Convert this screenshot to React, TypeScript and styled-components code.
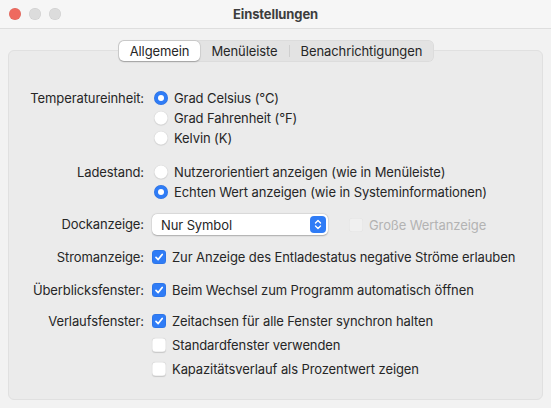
import React from "react";
import styled, { createGlobalStyle } from "styled-components";

const Global = createGlobalStyle`
  html, body { margin: 0; padding: 0; }
  body {
    width: 551px; height: 408px; overflow: hidden;
    font-family: Inter, "Noto Sans", "Liberation Sans", sans-serif;
    font-size: 13px;
    letter-spacing: -0.1px;
    -webkit-font-smoothing: antialiased;
  }
`;

const Window = styled.div`
  width: 551px;
  height: 408px;
  background: #f2f2f2;
  display: flex;
  flex-direction: column;
`;

const TitleBar = styled.div`
  height: 28px;
  flex: none;
  background: #f6f6f6;
  border-bottom: 1px solid #dedede;
  display: grid;
  grid-template-columns: 1fr auto 1fr;
  align-items: center;
`;

const Lights = styled.div`
  display: flex;
  gap: 8px;
  padding-left: 9px;
`;

const Light = styled.span<{ $c: string }>`
  width: 12px;
  height: 12px;
  border-radius: 50%;
  background: ${(p) => p.$c};
  box-shadow: inset 0 0 0 0.5px rgba(0, 0, 0, 0.08);
`;

const Title = styled.div`
  font-weight: 700;
  font-size: 13px;
  color: #3d3d3d;
`;

const Body = styled.div`
  flex: 1;
  display: flex;
  flex-direction: column;
  padding: 11px 8px 8px 8px;
`;

const Tabs = styled.div`
  align-self: center;
  margin-left: 1px;
  position: relative;
  z-index: 1;
  display: flex;
  align-items: center;
  height: 22px;
  box-sizing: border-box;
  padding: 1px;
  background: #e3e3e3;
  border-radius: 6px;
  box-shadow: inset 0 0 0 0.5px rgba(0, 0, 0, 0.06);
`;

const Tab = styled.div<{ $active?: boolean }>`
  height: 20px;
  display: flex;
  align-items: center;
  padding: 0 11px;
  color: #262626;
  border-radius: 5px;
  background: ${(p) => (p.$active ? "#ffffff" : "transparent")};
  box-shadow: ${(p) =>
    p.$active ? "0 0.5px 1.5px rgba(0,0,0,0.25), 0 0 0 0.5px rgba(0,0,0,0.08)" : "none"};
`;

const TabSep = styled.span`
  width: 1px;
  height: 12px;
  background: #cfcfcf;
`;

const Box = styled.div`
  margin-top: -12px;
  flex: 1;
  background: #ebebeb;
  border: 1px solid #e0e0e0;
  border-radius: 6px;
  padding: 37px 0 20px 0;
  display: flex;
  flex-direction: column;
`;

const Row = styled.div<{ $mt?: number }>`
  display: grid;
  grid-template-columns: 135px 1fr;
  column-gap: 8px;
  margin-top: ${(p) => p.$mt ?? 0}px;
`;

const Label = styled.div<{ $h?: number }>`
  text-align: right;
  color: #262626;
  height: ${(p) => p.$h ?? 20}px;
  line-height: ${(p) => p.$h ?? 20}px;
`;

const Controls = styled.div<{ $gap?: number }>`
  display: flex;
  flex-direction: column;
  gap: ${(p) => p.$gap ?? 0}px;
`;

const Line = styled.label<{ $disabled?: boolean; $indent?: number }>`
  display: flex;
  align-items: center;
  height: 20px;
  gap: 6px;
  padding-left: ${(p) => p.$indent ?? 0}px;
  color: ${(p) => (p.$disabled ? "#b3b3b3" : "#262626")};
  white-space: nowrap;
`;

const RadioDot = styled.span<{ $on?: boolean }>`
  width: 14px;
  height: 14px;
  box-sizing: border-box;
  border-radius: 50%;
  flex: none;
  display: flex;
  align-items: center;
  justify-content: center;
  background: ${(p) => (p.$on ? "#2f7cf6" : "#ffffff")};
  box-shadow: ${(p) =>
    p.$on
      ? "inset 0 0 0 0.5px rgba(0,0,0,0.1)"
      : "0 0.5px 1px rgba(0,0,0,0.15), inset 0 0 0 0.5px rgba(0,0,0,0.12)"};
  &::after {
    content: "";
    display: ${(p) => (p.$on ? "block" : "none")};
    width: 6px;
    height: 6px;
    border-radius: 50%;
    background: #ffffff;
  }
`;

const CheckBox = styled.span<{ $on?: boolean; $disabled?: boolean }>`
  width: 14px;
  height: 14px;
  box-sizing: border-box;
  border-radius: 3.5px;
  flex: none;
  display: flex;
  align-items: center;
  justify-content: center;
  background: ${(p) => (p.$on ? "#2f7cf6" : p.$disabled ? "#f0f0f0" : "#ffffff")};
  box-shadow: ${(p) =>
    p.$on
      ? "inset 0 0 0 0.5px rgba(0,0,0,0.1)"
      : p.$disabled
      ? "inset 0 0 0 0.5px rgba(0,0,0,0.06)"
      : "0 0.5px 1px rgba(0,0,0,0.15), inset 0 0 0 0.5px rgba(0,0,0,0.12)"};
`;

const SelectRow = styled.div`
  display: flex;
  align-items: center;
  gap: 21px;
  height: 21px;
`;

const Select = styled.div`
  width: 176px;
  height: 21px;
  box-sizing: border-box;
  background: #ffffff;
  border-radius: 5px;
  box-shadow: 0 0.5px 1.5px rgba(0, 0, 0, 0.25), 0 0 0 0.5px rgba(0, 0, 0, 0.06);
  display: flex;
  align-items: center;
  justify-content: space-between;
  padding: 0 2px 0 9px;
  color: #262626;
`;

const Stepper = styled.span`
  width: 16px;
  height: 17px;
  border-radius: 4px;
  background: #2f7cf6;
  display: flex;
  align-items: center;
  justify-content: center;
`;

const Check = () => (
  <svg width="10" height="10" viewBox="0 0 10 10">
    <path d="M2 5.3 L4.2 7.6 L8.2 2.4" fill="none" stroke="#fff" strokeWidth="1.7" strokeLinecap="round" strokeLinejoin="round" />
  </svg>
);

const Radio = ({ on, children }: { on?: boolean; children: React.ReactNode }) => (
  <Line $indent={2}>
    <RadioDot $on={on} />
    {children}
  </Line>
);

const Cb = ({ on, disabled, children }: { on?: boolean; disabled?: boolean; children: React.ReactNode }) => (
  <Line $disabled={disabled}>
    <CheckBox $on={on} $disabled={disabled}>{on && <Check />}</CheckBox>
    {children}
  </Line>
);

export default function App() {
  return (
    <>
      <Global />
      <Window>
        <TitleBar>
          <Lights>
            <Light $c="#ee6a5f" />
            <Light $c="#dcdcdc" />
            <Light $c="#dcdcdc" />
          </Lights>
          <Title>Einstellungen</Title>
          <div />
        </TitleBar>
        <Body>
          <Tabs>
            <Tab $active>Allgemein</Tab>
            <Tab>Menüleiste</Tab>
            <TabSep />
            <Tab>Benachrichtigungen</Tab>
          </Tabs>
          <Box>
            <Row>
              <Label>Temperatureinheit:</Label>
              <Controls>
                <Radio on>Grad Celsius (°C)</Radio>
                <Radio>Grad Fahrenheit (°F)</Radio>
                <Radio>Kelvin (K)</Radio>
              </Controls>
            </Row>
            <Row $mt={14}>
              <Label>Ladestand:</Label>
              <Controls>
                <Radio>Nutzerorientiert anzeigen (wie in Menüleiste)</Radio>
                <Radio on>Echten Wert anzeigen (wie in Systeminformationen)</Radio>
              </Controls>
            </Row>
            <Row $mt={12}>
              <Label $h={21}>Dockanzeige:</Label>
              <SelectRow>
                <Select>
                  Nur Symbol
                  <Stepper>
                    <svg width="8" height="11" viewBox="0 0 8 11">
                      <path d="M1.5 4 L4 1.5 L6.5 4 M1.5 7 L4 9.5 L6.5 7" fill="none" stroke="#fff" strokeWidth="1.4" strokeLinecap="round" strokeLinejoin="round" />
                    </svg>
                  </Stepper>
                </Select>
                <Cb disabled>Große Wertanzeige</Cb>
              </SelectRow>
            </Row>
            <Row $mt={12}>
              <Label>Stromanzeige:</Label>
              <Controls>
                <Cb on>Zur Anzeige des Entladestatus negative Ströme erlauben</Cb>
              </Controls>
            </Row>
            <Row $mt={13}>
              <Label>Überblicksfenster:</Label>
              <Controls>
                <Cb on>Beim Wechsel zum Programm automatisch öffnen</Cb>
              </Controls>
            </Row>
            <Row $mt={11}>
              <Label>Verlaufsfenster:</Label>
              <Controls $gap={4}>
                <Cb on>Zeitachsen für alle Fenster synchron halten</Cb>
                <Cb>Standardfenster verwenden</Cb>
                <Cb>Kapazitätsverlauf als Prozentwert zeigen</Cb>
              </Controls>
            </Row>
          </Box>
        </Body>
      </Window>
    </>
  );
}
